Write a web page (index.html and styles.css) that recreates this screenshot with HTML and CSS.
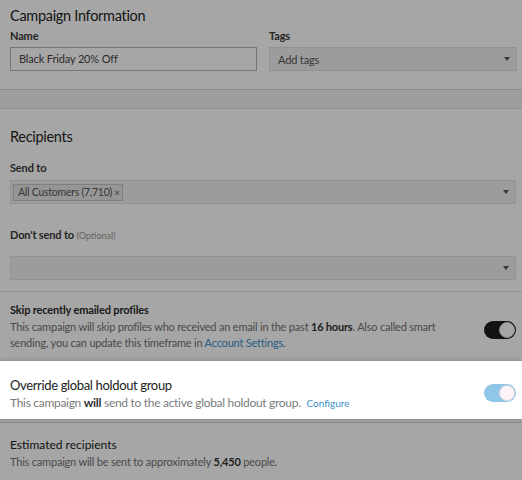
FILE: index.html
```html
<!DOCTYPE html>
<html>
<head>
<meta charset="utf-8">
<link rel="stylesheet" href="styles.css">
</head>
<body>
<div class="page">
  <section class="card card-info">
    <h2 class="card-title">Campaign Information</h2>
    <div class="two-col">
      <div class="field">
        <label class="label">Name</label>
        <div class="input">Black Friday 20% Off</div>
      </div>
      <div class="field">
        <label class="label">Tags</label>
        <div class="select"><span class="placeholder">Add tags</span><span class="caret"></span></div>
      </div>
    </div>
  </section>

  <section class="card card-recipients">
    <h2 class="card-title">Recipients</h2>
    <div class="field field-send">
      <label class="label">Send to</label>
      <div class="select"><span class="chip">All Customers (7,710) <span class="chip-x">×</span></span><span class="caret"></span></div>
    </div>
    <div class="field field-dont">
      <label class="label">Don't send to <span class="optional">(Optional)</span></label>
      <div class="select"><span></span><span class="caret"></span></div>
    </div>

    <div class="setting setting-skip">
      <div class="setting-text">
        <div class="setting-title">Skip recently emailed profiles</div>
        <p class="setting-desc">This campaign will skip profiles who received an email in the past <b>16 hours</b>. Also called smart sending, you can update this timeframe in <a class="link">Account Settings</a>.</p>
      </div>
      <span class="toggle toggle-dark"><span class="knob"></span></span>
    </div>

    <div class="setting setting-holdout">
      <div class="setting-text">
        <div class="holdout-title">Override global holdout group</div>
        <p class="holdout-desc">This campaign <b>will</b> send to the active global holdout group. <a class="link link-small">Configure</a></p>
      </div>
      <span class="toggle toggle-blue"><span class="knob"></span></span>
    </div>

    <div class="estimate">
      <div class="estimate-title">Estimated recipients</div>
      <p class="estimate-desc">This campaign will be sent to approximately <b>5,450</b> people.</p>
    </div>
  </section>

  <div class="overlay"></div>
</div>
</body>
</html>
```

FILE: styles.css
```css
html, body {
  margin: 0;
  padding: 0;
}
body {
  font-family: Lato, "Open Sans", sans-serif;
  color: #222;
  background: #f3f3f3;
}
.page {
  position: relative;
  min-height: 480px;
  overflow: hidden;
}
.overlay {
  position: absolute;
  inset: 0;
  background: rgba(0, 0, 0, 0.35);
  z-index: 1;
}
.card {
  background: #fff;
}
.card-info {
  padding: 6px 6px 18px 10px;
  border-bottom: 1px solid #d4d4d4;
}
.card-recipients {
  margin-top: 18px;
  border-top: 1px solid #e2e2e2;
  padding: 18px 0 20px 0;
}
.card-title {
  margin: 0;
  font-size: 14.5px;
  line-height: 20px;
  font-weight: 400;
  letter-spacing: -0.3px;
  color: #1f1f1f;
}
.card-recipients .card-title {
  padding: 0 10px;
}
.two-col {
  display: grid;
  grid-template-columns: 247px 248px;
  column-gap: 12px;
  margin-top: 3px;
}
.label {
  display: block;
  font-size: 11px;
  line-height: 14px;
  font-weight: 700;
  letter-spacing: -0.15px;
  color: #3a3a3a;
}
.optional {
  font-weight: 400;
  font-size: 9px;
  letter-spacing: 0;
  color: #999;
}
.input {
  margin-top: 4px;
  height: 24px;
  box-sizing: border-box;
  border: 1px solid #b5b5b5;
  background: #fff;
  font-size: 11px;
  line-height: 22px;
  letter-spacing: -0.15px;
  padding: 0 8px;
  color: #444;
}
.select {
  margin-top: 4px;
  height: 24px;
  box-sizing: border-box;
  border: 1px solid #e0e0e0;
  background: #f0f0f0;
  display: flex;
  align-items: center;
  justify-content: space-between;
  padding: 0 6px 0 8px;
  font-size: 11px;
  letter-spacing: -0.15px;
  color: #555;
}
.caret {
  width: 0;
  height: 0;
  border-left: 3.5px solid transparent;
  border-right: 3.5px solid transparent;
  border-top: 4px solid #555;
}
.field-send, .field-dont {
  padding: 0 6px 0 10px;
}
.field-send {
  margin-top: 14px;
}
.field-send .select {
  margin-top: 5px;
  padding-left: 2px;
}
.chip {
  display: inline-block;
  height: 17px;
  box-sizing: border-box;
  line-height: 15px;
  border: 1px solid #c4c4c4;
  background: #e6e6e6;
  padding: 0 3px 0 4px;
  font-size: 10.5px;
  letter-spacing: -0.25px;
  color: #555;
}
.chip-x {
  font-size: 9px;
}
.field-dont {
  margin-top: 24px;
}
.field-dont .select {
  margin-top: 13px;
}
.setting {
  display: flex;
  align-items: center;
  justify-content: space-between;
  padding: 0 6px 0 10px;
}
.setting-skip {
  margin-top: 11px;
  border-top: 1px solid #dcdcdc;
  padding-top: 11px;
  padding-bottom: 10px;
}
.setting-title {
  font-size: 11px;
  line-height: 14px;
  font-weight: 700;
  letter-spacing: -0.15px;
  color: #2a2a2a;
}
.setting-desc {
  margin: 2px 0 0;
  font-size: 11px;
  line-height: 16px;
  letter-spacing: -0.2px;
  color: #727272;
  max-width: 440px;
}
.setting-desc b, .estimate-desc b, .holdout-desc b {
  color: #333;
}
.link {
  color: #3d8fc8;
}
.setting-holdout {
  position: relative;
  z-index: 2;
  background: #fff;
  height: 58px;
  box-sizing: border-box;
  box-shadow: 0 0 5px rgba(0, 0, 0, 0.25);
  padding-top: 6px;
}
.holdout-title {
  font-size: 13px;
  line-height: 18px;
  letter-spacing: -0.35px;
  color: #222;
}
.holdout-desc {
  margin: 1px 0 0;
  font-size: 12px;
  line-height: 16px;
  letter-spacing: -0.3px;
  color: #7a7a7a;
}
.link-small {
  font-size: 10px;
  letter-spacing: 0;
  margin-left: 3px;
}
.toggle {
  width: 32px;
  height: 18px;
  border-radius: 9px;
  box-sizing: border-box;
  display: flex;
  align-items: center;
  justify-content: flex-end;
  padding: 1px;
  flex-shrink: 0;
}
.toggle-dark {
  background: #1c1c1c;
  margin-top: 6px;
}
.toggle-blue {
  background: #90c6e8;
}
.knob {
  width: 16px;
  height: 16px;
  box-sizing: border-box;
  border-radius: 50%;
  background: #fff;
  border: 1px solid #d8d8d8;
}
.toggle-blue .knob {
  background: #fbf3f5;
  border-color: #e3dade;
}
.estimate {
  margin-top: 3px;
  border-top: 1px solid #dcdcdc;
  padding: 14px 10px 0;
}
.estimate-title {
  font-size: 12px;
  line-height: 16px;
  color: #222;
}
.estimate-desc {
  margin: 1px 0 0;
  font-size: 11px;
  line-height: 16px;
  letter-spacing: -0.2px;
  color: #727272;
}
```
